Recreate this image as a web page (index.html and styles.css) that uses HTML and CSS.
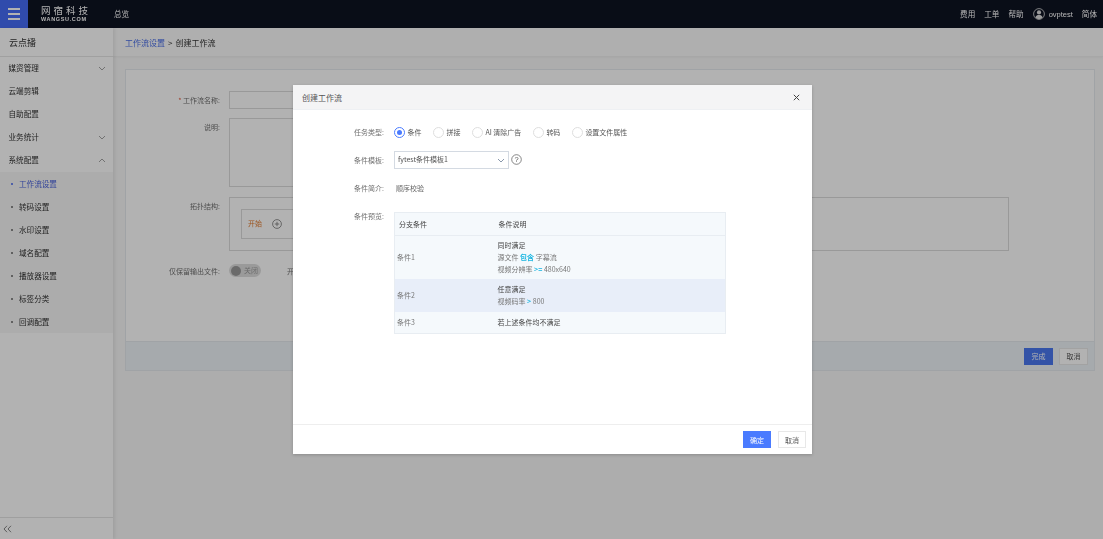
FILE: index.html
```html
<!DOCTYPE html>
<html lang="zh">
<head>
<meta charset="utf-8">
<title>创建工作流</title>
<link rel="stylesheet" href="styles.css">
</head>
<body>
<header class="topbar">
  <button class="burger"><span></span><span></span><span></span></button>
  <div class="logo"><div class="logo-cn">网宿科技</div><div class="logo-en">WANGSU.COM</div></div>
  <a class="nav-home">总览</a>
  <nav class="top-right">
    <a>费用</a><a>工单</a><a>帮助</a>
    <span class="user">
      <svg width="12" height="12" viewBox="0 0 12 12"><circle cx="6" cy="6" r="5.4" fill="none" stroke="#ddd" stroke-width=".8"/><circle cx="6" cy="4.4" r="2.1" fill="#ddd"/><path d="M2.4 9.6c.5-2 2-2.6 3.6-2.6s3.100.6 3.600 2.600a5 5 0 0 1-7.200 0z" fill="#ddd"/></svg>
      <b>ovptest</b>
    </span>
    <a>简体</a>
  </nav>
</header>
<div class="shell">
  <aside class="sidebar">
    <div class="side-title">云点播</div>
    <ul class="menu">
      <li class="menu-item">媒资管理<svg class="chev" viewBox="0 0 8 5"><path d="M1 1l3 3 3-3"/></svg></li>
      <li class="menu-item">云端剪辑</li>
      <li class="menu-item">自助配置</li>
      <li class="menu-item">业务统计<svg class="chev" viewBox="0 0 8 5"><path d="M1 1l3 3 3-3"/></svg></li>
      <li class="menu-item">系统配置<svg class="chev" viewBox="0 0 8 5"><path d="M1 4l3-3 3 3"/></svg></li>
    </ul>
    <ul class="submenu">
      <li class="sub-item active">工作流设置</li>
      <li class="sub-item">转码设置</li>
      <li class="sub-item">水印设置</li>
      <li class="sub-item">域名配置</li>
      <li class="sub-item">播放器设置</li>
      <li class="sub-item">标签分类</li>
      <li class="sub-item">回调配置</li>
    </ul>
    <div class="side-foot"><svg width="9" height="8" viewBox="0 0 9 8"><path d="M4 .8L1 4l3 3.200M8 .8L5 4l3 3.200" fill="none" stroke="#777" stroke-width=".9"/></svg></div>
  </aside>
  <main class="main">
    <div class="crumbs"><a>工作流设置</a><span class="sep">&gt;</span>创建工作流</div>
    <section class="card">
      <div class="card-body">
        <div class="row row-name"><label><i>*</i> 工作流名称:</label><div class="input"></div></div>
        <div class="row row-desc"><label>说明:</label><div class="input area"></div></div>
        <div class="row row-topo"><label>拓扑结构:</label>
          <div class="topo"><div class="topo-inner"><span class="start">开始</span>
            <svg width="10" height="10" viewBox="0 0 10 10"><circle cx="5" cy="5" r="4.400" fill="none" stroke="#666" stroke-width=".7"/><path d="M5 2.800v4.400M2.800 5h4.400" stroke="#666" stroke-width=".7"/></svg>
          </div></div>
        </div>
        <div class="row row-toggle"><label>仅保留输出文件:</label><span class="toggle"><span class="knob"></span>关闭</span><span class="after">开启</span></div>
      </div>
      <div class="card-foot"><button class="btn primary dim">完成</button><button class="btn">取消</button></div>
    </section>
  </main>
</div>
<div class="overlay"></div>
<div class="modal">
  <div class="modal-head">创建工作流<svg class="close" width="7" height="7" viewBox="0 0 7 7"><path d="M.8.8l5.400 5.400M6.200.8L.8 6.200" stroke="#444" stroke-width="1"/></svg></div>
  <div class="modal-body">
    <div class="f f-type"><label>任务类型:</label>
      <div class="radios">
        <span class="radio on"><i></i>条件</span>
        <span class="radio"><i></i>拼接</span>
        <span class="radio"><i></i>AI 清除广告</span>
        <span class="radio"><i></i>转码</span>
        <span class="radio"><i></i>设置文件属性</span>
      </div>
    </div>
    <div class="f f-tpl"><label>条件模板:</label>
      <div class="select">fytest条件模板1<svg width="8" height="5" viewBox="0 0 8 5"><path d="M1 1l3 3 3-3" fill="none" stroke="#7c8ca3" stroke-width=".9"/></svg></div>
      <svg class="help" width="11" height="11" viewBox="0 0 11 11"><circle cx="5.500" cy="5.500" r="4.800" fill="none" stroke="#555" stroke-width=".7"/><text x="5.500" y="8" text-anchor="middle" class="help-q">?</text></svg>
    </div>
    <div class="f f-intro"><label>条件简介:</label><span>顺序校验</span></div>
    <div class="f f-prev"><label>条件预览:</label>
      <table class="tbl">
        <thead><tr><th class="c1">分支条件</th><th>条件说明</th></tr></thead>
        <tbody>
          <tr class="r1"><td class="c1">条件1</td><td><div class="dk">同时满足</div><div>源文件 <b>包含</b> 字幕流</div><div>视频分辨率 <b class="op">&gt;=</b> 480x640</div></td></tr>
          <tr class="r2"><td class="c1">条件2</td><td><div class="dk">任意满足</div><div>视频码率 <b class="op">&gt;</b> 800</div></td></tr>
          <tr class="r3"><td class="c1">条件3</td><td><div class="dk">若上述条件均不满足</div></td></tr>
        </tbody>
      </table>
    </div>
  </div>
  <div class="modal-foot"><button class="btn primary">确定</button><button class="btn">取消</button></div>
</div>
</body>
</html>
```
FILE: styles.css
```css
* { box-sizing: border-box; }
html, body { margin: 0; height: 539px; overflow: hidden; }
body { font: 7.600px/1.400 "Noto Sans CJK SC", "Liberation Sans", sans-serif; color: #333; background: #f8f8f8; display: flex; flex-direction: column; }
ul { list-style: none; margin: 0; padding: 0; }
label { color: #707070; font-size: 7px; }

.topbar { height: 28px; flex: none; background: #0e1322; display: flex; align-items: center; color: #fff; filter: blur(.3px); }
.burger { width: 28px; height: 28px; padding: 8px 8px; border: 0; background: #466cf6; display: flex; flex-direction: column; justify-content: space-between; }
.burger span { display: block; height: 2px; background: #fff; }
.logo { margin-left: 13px; width: 50px; color: #fff; }
.logo-cn { font: 9.500px/10px "Liberation Serif", "Noto Sans CJK SC", serif; letter-spacing: 3px; white-space: nowrap; }
.logo-en { font: bold 5.500px/6px "Liberation Sans", sans-serif; letter-spacing: .65px; white-space: nowrap; }
.nav-home { margin-left: 23px; }
.top-right { margin-left: auto; margin-right: 6px; display: flex; align-items: center; gap: 9px; }
.user { display: flex; align-items: center; gap: 4px; }
.user b { font: 7.500px "Liberation Sans", sans-serif; }

.shell { flex: 1; display: flex; min-height: 0; filter: blur(.3px); }
.sidebar { width: 113px; background: #fff; box-shadow: 2px 0 3px rgba(0,0,0,.08); display: flex; flex-direction: column; position: relative; }
.side-title { height: 29px; flex: none; padding-left: 9px; font-size: 9px; line-height: 29px; border-bottom: 1px solid #e6e6e6; }
.menu-item { height: 23px; padding: 0 7px 0 8.500px; display: flex; align-items: center; justify-content: space-between; }
.chev { width: 8px; height: 5px; fill: none; stroke: #8a8a8a; stroke-width: .8; }
.submenu { background: #f6f6f6; flex: none; }
.sub-item { height: 23px; padding-left: 19px; line-height: 23px; position: relative; }
.sub-item::before { content: ""; position: absolute; left: 11px; top: 10.500px; width: 2px; height: 2px; border-radius: 50%; background: #666; }
.sub-item.active { color: #4a63dc; }
.sub-item.active::before { background: #4469f0; }
.side-foot { margin-top: auto; height: 22px; border-top: 1px solid #e4e4e4; padding: 7px 0 0 3px; }

.main { flex: 1; min-width: 0; display: flex; flex-direction: column; }
.crumbs { height: 29px; flex: none; padding-left: 12px; line-height: 29px; font-size: 8px; background: #fbfbfb; border-bottom: 1px solid #f0f0f0; box-shadow: 0 1px 2px rgba(0,0,0,.03); }
.crumbs a { color: #4a6ee6; }
.sep { margin: 0 3px; }
.card { margin: 12px 8px 0 12px; height: 302px; flex: none; background: #fff; border: 1px solid #e6eaee; display: flex; flex-direction: column; }
.card-body { flex: 1; padding: 21px 85px 0 0; }
.row { display: flex; align-items: flex-start; }
.row label { width: 94px; flex: none; margin-right: 9px; text-align: right; line-height: 18px; }
.row label i { color: #e0563a; font-style: normal; }
.input { width: 420px; height: 18px; border: 1px solid #dcdcdc; background: #fff; }
.row-desc { margin-top: 9px; }
.input.area { height: 69px; }
.row-topo { margin-top: 10px; }
.topo { flex: 1; height: 54px; border: 1px solid #dcdcdc; padding: 11px 0 0 11px; }
.topo-inner { width: 420px; height: 30px; border: 1px solid #dcdcdc; display: flex; align-items: center; padding-left: 6px; gap: 10px; font-size: 7px; }
.start { color: #e07a2e; }
.row-toggle { margin-top: 11px; }
.toggle { width: 32px; height: 13px; border-radius: 7px; background: #ddd; color: #999; display: flex; align-items: center; gap: 3px; padding-left: 2px; margin-top: 2px; font-size: 7px; }
.knob { width: 10px; height: 10px; border-radius: 50%; background: #9a9a9a; }
.after { margin-left: 26px; color: #777; line-height: 18px; font-size: 7px; }
.card-foot { height: 29px; flex: none; background: #eef4f8; border-top: 1px solid #e6eaee; display: flex; justify-content: flex-end; align-items: center; gap: 6px; padding-right: 6px; }

.btn { height: 17px; width: 28px; padding: 0; border: 1px solid #e8e8e8; background: #fff; color: #555; font: 7px "Noto Sans CJK SC", sans-serif; }
.btn.primary { background: #4a7bff; border-color: #4a7bff; color: #fff; }
.btn.dim { background: #4a78f0; border-color: #4a78f0; }
.card-foot .btn { width: 29px; }

.overlay { position: fixed; inset: 0; background: rgba(0,0,0,.3); }
.modal { position: fixed; left: 293px; top: 85px; width: 519px; height: 369px; background: #fff; display: flex; flex-direction: column; box-shadow: 0 1px 3px rgba(0,0,0,.2); font-size: 7px; filter: blur(.3px); }
.modal-head { height: 25px; flex: none; background: #f4f4f5; border-bottom: 1px solid #eef0f3; padding: 0 9px; font-size: 8px; line-height: 25px; color: #555; display: flex; justify-content: space-between; align-items: center; }
.close { margin-right: 3px; }
.modal-body { flex: 1; padding-top: 15px; }
.f { display: flex; align-items: flex-start; }
.f > label { width: 91px; flex: none; margin-right: 10px; text-align: right; line-height: 15px; }
.f-type { height: 26px; }
.radios { display: flex; gap: 11.500px; line-height: 15px; color: #555; }
.radio { display: flex; align-items: center; gap: 2.500px; height: 14px; }
.radio i { width: 11px; height: 11px; border-radius: 50%; border: 1px solid #dedede; background: #fff; position: relative; }
.radio.on i { border-color: #4a7bff; }
.radio.on i::after { content: ""; position: absolute; inset: 2px; border-radius: 50%; background: #4a7bff; }
.f-tpl { height: 28px; }
.f-tpl > label { line-height: 18px; }
.select { width: 115px; height: 18px; border: 1px solid #d4dae2; padding: 0 3px; display: flex; align-items: center; justify-content: space-between; color: #555; }
.help { margin: 3px 0 0 2px; }
.help-q { font: 7.500px "Liberation Sans", sans-serif; fill: #555; }
.f-intro { height: 28px; color: #666; line-height: 18px; }
.f-intro > label { line-height: 18px; }
.f-prev > label { line-height: 18px; }
.f-intro span { margin-left: 2px; }
.tbl { width: 332px; margin-top: 5px; border-collapse: collapse; border: 1px solid #e8edf2; table-layout: fixed; color: #777; font-size: 7px; line-height: 12px; background: #f5f9fc; }
.tbl th { height: 23px; text-align: left; font-weight: 400; color: #444; padding: 0 0 0 1px; border-bottom: 1px solid #e8edf2; }
.tbl th.c1 { padding-left: 4px; }
.tbl td { padding: 0; }
.tbl .c1 { width: 103px; }
.tbl td.c1 { padding-left: 2px; }
.tbl b { color: #18b5e0; }
.tbl .dk { color: #444; }
.r1 { height: 43px; }
.r2 { height: 33px; background: #e8eef9; }
.r3 { height: 22px; }
.modal-foot { height: 30px; flex: none; border-top: 1px solid #eee; display: flex; justify-content: flex-end; align-items: center; gap: 7px; padding: 0 6px 0 0; }
```
